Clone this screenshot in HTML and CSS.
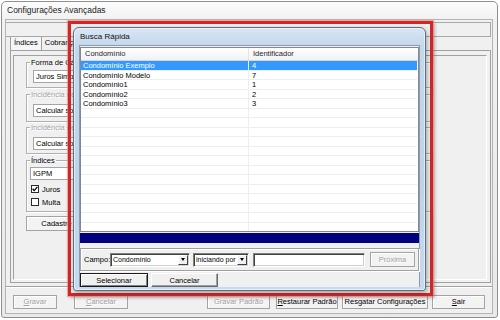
FILE: index.html
```html
<!DOCTYPE html>
<html lang="pt-BR">
<head>
  <meta charset="UTF-8">
  <meta name="viewport" content="width=device-width, initial-scale=1.0">
  <title>Configurações Avançadas</title>
  <link rel="stylesheet" href="styles.css">
</head>
<body>

  <div class="window">
    <div class="window-title">Configurações Avançadas</div>
    <div class="window-client">
      <div class="top-panel"></div>
      <div class="tabs">
        <span class="tab tab-active">Índices</span>
        <span class="tab">Cobrança</span>
      </div>
      <div class="tab-sheet">
        <div class="sheet-panel">
          <fieldset class="group group-forma">
            <legend>Forma de Cálculo</legend>
            <div class="combo">Juros Simples</div>
          </fieldset>
          <fieldset class="group group-juros">
            <legend class="disabled">Incidência de Juros</legend>
            <div class="combo">Calcular sobre o valor original</div>
          </fieldset>
          <fieldset class="group group-multa">
            <legend class="disabled">Incidência de Multa</legend>
            <div class="combo">Calcular sobre o valor original</div>
          </fieldset>
          <fieldset class="group group-indices">
            <legend>Índices</legend>
            <div class="combo combo-igpm">IGPM</div>
            <div class="check-row check-first">
              <span class="check">
                <svg width="6" height="6" viewBox="0 0 6 6"><path d="M0.6 2.8l1.6 1.8L5.4 0.9" fill="none" stroke="#000" stroke-width="1.3"/></svg>
              </span>
              Juros
            </div>
            <div class="check-row"><span class="check"></span>Multa</div>
          </fieldset>
          <button class="btn btn-cadastre">Cadastre Índices</button>
        </div>
      </div>
      <div class="button-bar">
        <button class="btn disabled btn-gravar"><u>G</u>ravar</button>
        <button class="btn disabled btn-cancelar"><u>C</u>ancelar</button>
        <button class="btn disabled btn-gravar-padrao">Gravar Padrão</button>
        <button class="btn btn-restaurar"><u>R</u>estaurar Padrão</button>
        <button class="btn btn-resgatar">Resgatar Configurações</button>
        <button class="btn btn-sair"><u>S</u>air</button>
      </div>
    </div>
  </div>

  <div class="highlight"></div>

  <div class="dialog">
    <div class="dialog-title">Busca Rápida</div>
    <div class="dialog-client">
      <div class="listview">
        <div class="lv-header">
          <span class="col-name">Condomínio</span>
          <span class="col-id">Identificador</span>
        </div>
        <div class="lv-row selected"><span class="col-name">Condomínio Exemplo</span><span class="col-id">4</span></div>
        <div class="lv-row"><span class="col-name">Condomínio Modelo</span><span class="col-id">7</span></div>
        <div class="lv-row"><span class="col-name">Condomínio1</span><span class="col-id">1</span></div>
        <div class="lv-row"><span class="col-name">Condomínio2</span><span class="col-id">2</span></div>
        <div class="lv-row"><span class="col-name">Condomínio3</span><span class="col-id">3</span></div>
        <div class="lv-row"><span class="col-name"></span><span class="col-id"></span></div>
        <div class="lv-row"><span class="col-name"></span><span class="col-id"></span></div>
        <div class="lv-row"><span class="col-name"></span><span class="col-id"></span></div>
        <div class="lv-row"><span class="col-name"></span><span class="col-id"></span></div>
        <div class="lv-row"><span class="col-name"></span><span class="col-id"></span></div>
        <div class="lv-row"><span class="col-name"></span><span class="col-id"></span></div>
        <div class="lv-row"><span class="col-name"></span><span class="col-id"></span></div>
        <div class="lv-row"><span class="col-name"></span><span class="col-id"></span></div>
        <div class="lv-row"><span class="col-name"></span><span class="col-id"></span></div>
        <div class="lv-row"><span class="col-name"></span><span class="col-id"></span></div>
        <div class="lv-row"><span class="col-name"></span><span class="col-id"></span></div>
        <div class="lv-row"><span class="col-name"></span><span class="col-id"></span></div>
        <div class="lv-row"><span class="col-name"></span><span class="col-id"></span></div>
      </div>

      <div class="status-bar"></div>

      <div class="search">
        <span class="search-label">Campo:</span>
        <div class="classic-combo combo-campo"><span class="combo-text">Condomínio</span><span class="drop"></span></div>
        <div class="classic-combo combo-modo"><span class="combo-text">iniciando por</span><span class="drop"></span></div>
        <div class="classic-combo search-input"></div>
        <button class="btn disabled btn-next">Próxima</button>
      </div>

      <div class="dialog-buttons">
        <button class="btn-classic btn-default">Selecionar</button>
        <button class="btn-classic">Cancelar</button>
      </div>
    </div>
  </div>

</body>
</html>
```

FILE: styles.css
```css
* {
  box-sizing: border-box;
}

body {
  margin: 0;
  width: 500px;
  height: 320px;
  overflow: hidden;
  position: relative;
  background: #ffffff;
  font-family: "Liberation Sans", Arial, sans-serif;
  font-size: 7.5px;
  color: #000;
}

/* main window */
.window {
  margin: 1px 0 0 1px;
  width: 497px;
  height: 317px;
  border: 1px solid #8e8f8f;
  border-radius: 5px 5px 3px 3px;
  background: linear-gradient(#fdfdfd, #f1f1f1 18px, #e9e9e9);
  padding: 0 4px 3px 3px;
  display: flex;
  flex-direction: column;
}

.window-title {
  height: 17px;
  line-height: 17px;
  padding-left: 2px;
  font-size: 8.5px;
  color: #1b1b1b;
}

.window-client {
  flex: 1;
  background: #f0f0f0;
  border: 1px solid #b4b4b4;
  display: flex;
  flex-direction: column;
}

.top-panel {
  margin: 2px 1px 0 0;
  height: 15px;
  border: 1px solid #a8a8a8;
  border-left: none;
}

.tabs {
  display: flex;
  height: 13px;
  padding-left: 4px;
}

.tab {
  padding: 0 3px;
  line-height: 12px;
  border-right: 1px solid #a0a0a0;
}

.tab-active {
  border-left: 1px solid #a0a0a0;
  background: #f6f6f6;
}

.tab-sheet {
  height: 233px;
  margin: 0 1px 0 4px;
  border: 1px solid #a0a0a0;
  padding: 4px 3px 2px 2px;
  display: flex;
}

.sheet-panel {
  flex: 1;
  border: 1px solid;
  border-color: #a0a0a0 #ffffff #ffffff #a0a0a0;
  padding: 1px 0 0 12px;
}

.group {
  margin: 0;
  width: 407px;
  min-width: 0;
  padding: 0 6px 4px;
  border: 1px solid #b0b0b0;
  box-shadow: inset 1px 1px 0 #fff, 1px 1px 0 #fff;
}

.group legend {
  padding: 0 1px;
  margin-left: -3px;
  line-height: 9px;
}

.disabled {
  color: #a3a3a3;
  text-shadow: 1px 1px 0 #fff;
}

.combo {
  width: 200px;
  height: 13px;
  line-height: 11px;
  padding-left: 2px;
  background: #fff;
  border: 1px solid #a5a5a5;
}

.group-forma {
  margin-top: 0.5px;
}

.group-forma .combo {
  margin-top: 3.5px;
}

.group-juros {
  margin-top: 1.5px;
}

.group-juros .combo,
.group-multa .combo {
  margin-top: 5.5px;
}

.group-multa {
  margin-top: 0.5px;
  padding-bottom: 3px;
}

.group-indices {
  margin-top: 1.5px;
  padding-left: 3px;
}

.group-indices legend {
  margin-left: 0;
}

.combo-igpm {
  margin-top: 2px;
  width: 150px;
}

.check-row {
  display: flex;
  align-items: center;
  gap: 3px;
  height: 9px;
  margin-top: 4px;
}

.check-first {
  margin-top: 5px;
}

.check {
  width: 8px;
  height: 8px;
  margin-left: 1px;
  border: 1px solid #2a2a2a;
  background: #fff;
  display: flex;
  align-items: center;
  justify-content: center;
}

/* buttons of the main window */
.btn {
  height: 14px;
  padding: 0;
  font: inherit;
  line-height: 12px;
  color: #000;
  background: #f3f3f3;
  border: 1px solid #a3a3a3;
  box-shadow: inset 1px 1px 0 #fff;
}

.btn.disabled {
  color: #a0a0a0;
}

.btn-cadastre {
  margin-top: 4.5px;
  width: 87px;
  height: 15px;
}

.button-bar {
  flex: 1;
  margin-top: 3px;
  border-top: 1px solid #a0a0a0;
  box-shadow: inset 0 1px 0 #fff;
  display: flex;
  align-items: flex-start;
  padding: 8px 0 0 7px;
}

.btn-gravar { width: 44px; }
.btn-cancelar { width: 54px; margin-left: 17px; }
.btn-gravar-padrao { width: 63px; margin-left: 79px; }
.btn-restaurar { width: 62px; margin-left: 6px; }
.btn-resgatar { width: 86px; margin-left: 4px; }
.btn-sair { width: 53px; margin-left: 4px; }

/* red marker round the dialog */
.highlight {
  position: absolute;
  left: 68px;
  top: 21px;
  width: 365px;
  height: 275px;
  border: 3px solid #d02828;
  box-shadow: 0 0 1px 1px rgba(235, 120, 120, 0.6), 2px 2px 3px rgba(0, 0, 0, 0.25);
}

/* Busca Rápida dialog */
.dialog {
  position: absolute;
  left: 73px;
  top: 27px;
  width: 353px;
  height: 264px;
  border: 1px solid #5f6d7c;
  border-radius: 6px 6px 3px 3px;
  background: linear-gradient(#d9e6f4, #c4d8ec 17px, #bed3e9 60%, #c8daee);
  box-shadow: inset 0 0 0 1px rgba(255, 255, 255, 0.55), 1px 2px 5px rgba(0, 0, 0, 0.35);
  padding: 0 5px 3px;
  display: flex;
  flex-direction: column;
}

.dialog-title {
  height: 17px;
  line-height: 17px;
  padding-left: 1px;
  font-size: 8px;
  color: #111;
}

.dialog-client {
  flex: 1;
  background: #f0f0f0;
  border: 1px solid #8b9bb0;
  border-bottom: none;
  padding-top: 1px;
  display: flex;
  flex-direction: column;
}

.listview {
  height: 185px;
  flex-shrink: 0;
  border: 1px solid #828790;
  background: #fff;
  overflow: hidden;
}

.lv-header {
  display: flex;
  height: 13px;
  line-height: 12px;
  background: linear-gradient(#ffffff, #f1f2f4);
  border-bottom: 1px solid #d5d5d5;
  color: #1e1e1e;
}

.col-name {
  width: 168px;
  padding-left: 4px;
  border-right: 1px solid #e3e5e8;
}

.col-id {
  flex: 1;
  padding-left: 4px;
}

.lv-row {
  display: flex;
  width: 336px;
  height: 9.5px;
  line-height: 9px;
  border-bottom: 1px solid #eeeeee;
}

.lv-row .col-name {
  padding-left: 2px;
  border-right: 1px solid #eeeeee;
}

.lv-row .col-id {
  padding-left: 3px;
}

.lv-row.selected {
  background: #3399ff;
  color: #fff;
}

.status-bar {
  margin-top: 1px;
  height: 10px;
  background: #000080;
}

.search {
  margin-top: 5px;
  height: 23px;
  border: 1px solid #a0a0a0;
  box-shadow: inset 1px 1px 0 #fff, 1px 1px 0 #fff;
  display: flex;
  align-items: center;
  padding-left: 3px;
}

.search-label {
  width: 26px;
}

.classic-combo {
  height: 14px;
  background: #fff;
  border: 1px solid;
  border-color: #808080 #ffffff #ffffff #808080;
  box-shadow: inset 1px 1px 0 #404040, inset -1px -1px 0 #d4d0c8;
  display: flex;
  align-items: center;
  padding: 0 1px 0 2px;
}

.combo-text {
  flex: 1;
  white-space: nowrap;
  font-size: 7px;
}

.combo-campo {
  width: 80px;
}

.combo-modo {
  width: 56px;
  margin-left: 3px;
}

.drop {
  flex-shrink: 0;
  width: 10px;
  height: 10px;
  background: #f0f0f0;
  border: 1px solid;
  border-color: #ffffff #404040 #404040 #ffffff;
  display: flex;
  align-items: center;
  justify-content: center;
}

.drop::after {
  content: "";
  border-left: 2.5px solid transparent;
  border-right: 2.5px solid transparent;
  border-top: 3px solid #000;
}

.search-input {
  width: 112px;
  margin-left: 4px;
}

.btn-next {
  width: 45px;
  height: 15px;
  margin-left: 5px;
}

.dialog-buttons {
  margin-top: 2px;
  display: flex;
  gap: 3px;
}

.btn-classic {
  width: 67px;
  height: 14px;
  padding: 0;
  font: inherit;
  color: #000;
  background: #f0f0f0;
  border: 1px solid;
  border-color: #ffffff #6a6a6a #6a6a6a #ffffff;
  box-shadow: inset -1px -1px 0 #a0a0a0;
}

.btn-default {
  width: 68px;
  border-color: #1a1a1a;
  box-shadow: inset 1px 1px 0 #fff, inset -1px -1px 0 #808080;
}
```
